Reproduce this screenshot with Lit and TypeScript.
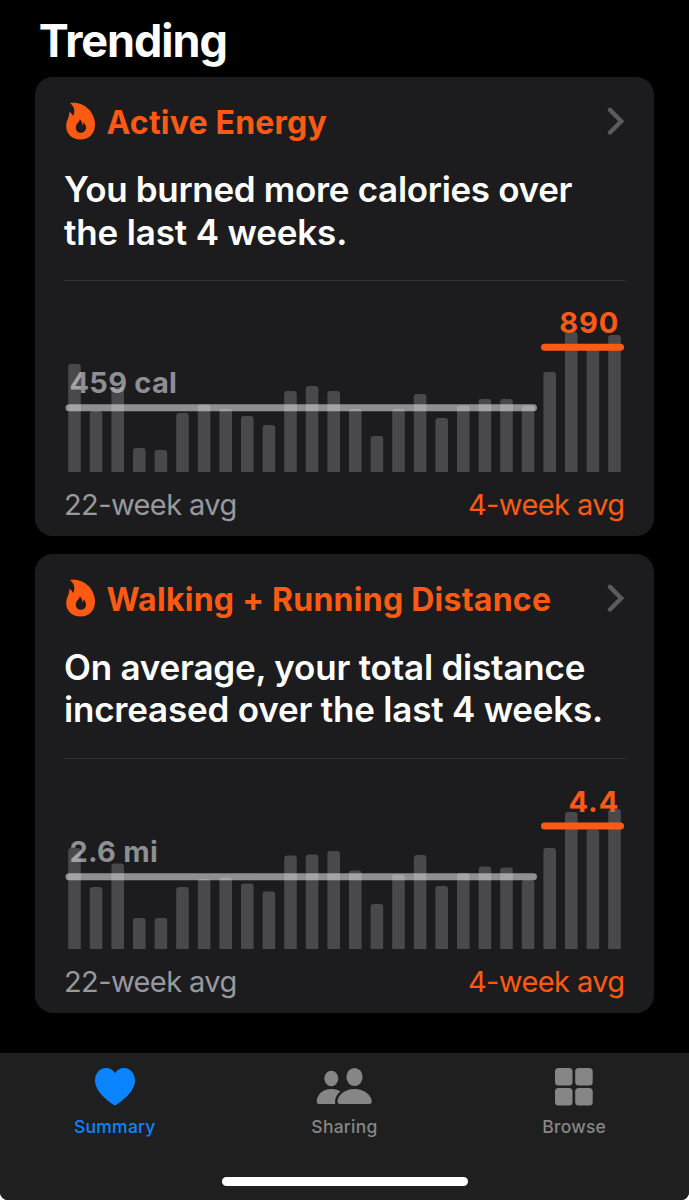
import { LitElement, html, svg, css } from "lit";
import { customElement, property } from "lit/decorators.js";

interface Trend {
  title: string;
  tone: string;
  lines: string[];
  baseLabel: string;
  baseY: number;
  recentLabel: string;
  recentY: number;
  bars: number[];
}

const CHART_H = 191;

const trends: Trend[] = [
  {
    title: "Active Energy",
    tone: "tight",
    lines: ["You burned more calories over", "the last 4 weeks."],
    baseLabel: "459 cal",
    baseY: 126.8,
    recentLabel: "890",
    recentY: 66.3,
    bars: [108, 61, 85, 24, 22, 59, 67.5, 63, 56, 47, 81, 86, 81, 63, 36, 63, 78, 54, 66.5, 73, 73, 66.5, 100, 140, 123, 137],
  },
  {
    title: "Walking + Running Distance",
    tone: "loose",
    lines: ["On average, your total distance", "increased over the last 4 weeks."],
    baseLabel: "2.6 mi",
    baseY: 118.7,
    recentLabel: "4.4",
    recentY: 68,
    bars: [101, 62, 85.5, 31, 31, 62, 70, 71.5, 65.5, 57.5, 93.5, 94.5, 98, 78.5, 45, 74.5, 94, 63, 76, 82.5, 81.5, 69, 101, 137, 119.5, 140],
  },
];

@customElement("trend-card")
export class TrendCard extends LitElement {
  @property({ attribute: false }) trend!: Trend;

  static styles = css`
    :host { display: block; height: 459.4px; border-radius: 18px; background: #1c1c1e; padding: 26px 28px 0 29px; box-sizing: border-box; }
    .head { display: flex; align-items: center; height: 40px; color: #ff5a13; }
    .flame { width: 38px; height: 45px; margin: -3px 6.5px 0 -2px; flex: none; }
    .title { flex: 1; font-size: 32px; line-height: 40px; font-weight: 650; white-space: nowrap; letter-spacing: 0.2px; }
    .loose-title { letter-spacing: 0.26px; }
    .chev { width: 20px; height: 30px; margin-top: -2px; flex: none; }
    .copy { margin-top: 25.7px; color: #fff; font-size: 35px; line-height: 42.5px; font-weight: 600; white-space: nowrap; }
    .tight { letter-spacing: -0.32px; }
    .tight .line + .line { letter-spacing: -0.15px; }
    .loose { letter-spacing: -0.2px; }
    .line { display: block; }
    .rule { height: 1px; margin-top: 27px; background: #323235; }
    .chart { display: block; width: 562px; height: 191px; margin-top: -0.3px; overflow: visible; }
    .num { font-size: 29px; font-weight: 650; letter-spacing: 0.25px; }
    .now { letter-spacing: 0.9px; }
    .foot { display: flex; justify-content: space-between; margin-top: 12.6px; font-size: 29px; line-height: 40px; color: #98989f; white-space: nowrap; padding: 0 1px 0 0; letter-spacing: -0.6px; }
    .recent { color: #ff5a13; }
  `;

  render() {
    const t = this.trend;
    return html`
      <div class="head">
        <svg class="flame" viewBox="0 0 38 45" fill="currentColor">
          <path fill-rule="evenodd" d="M8 4C22 2 33 13 33 25.500C33 34.500 27 40.500 18.600 40.500C10 40.500 4.200 35 4.200 27C4.200 21.500 7.600 18.500 7.400 12.800C9.300 14 10.400 15.400 11 17.200C13.600 12.500 12.500 7.500 8 4ZM17.800 20C17.600 23.300 13.800 24.700 13.800 28.700C13.800 31.800 16 33.800 18.900 33.800C21.900 33.800 24 31.700 24 28.800C24 26.200 22.700 24.400 21.400 23.300C21.500 24.800 21.100 25.900 20.300 26.500C20.500 24 19.600 21.800 17.800 20Z"/>
        </svg>
        <span class="title ${t.tone}-title">${t.title}</span>
        <svg class="chev" viewBox="0 0 20 30" fill="none" stroke="#5b5b5f" stroke-width="4.400" stroke-linecap="round" stroke-linejoin="miter"><path d="M4 2.900L15.200 14.200L4 25.500"/></svg>
      </div>
      <div class="copy ${t.tone}">${t.lines.map((l) => html`<span class="line">${l}</span>`)}</div>
      <div class="rule"></div>
      <svg class="chart" viewBox="64 0 562 191">
        <text class="num" x="69.500" y=${t.baseY - 15} fill="#8e8e93">${t.baseLabel}</text>
        <line x1="69" x2="533.500" y1=${t.baseY} y2=${t.baseY} stroke="#8e8e93" stroke-width="7" stroke-linecap="round"/>
        ${t.bars.map((h, i) => {
          const x = 68.2 + i * 21.6, y = CHART_H - h;
          return svg`<path fill="#fff" fill-opacity="0.2" d="M${x} ${CHART_H}V${y + 3}q0 -3 3 -3h6.600q3 0 3 3V${CHART_H}Z"/>`;
        })}
        <line x1="544.500" x2="620.500" y1=${t.recentY} y2=${t.recentY} stroke="#ff5a13" stroke-width="7" stroke-linecap="round"/>
        <text class="num now" x="619.200" y=${t.recentY - 14.3} text-anchor="end" fill="#ff5a13">${t.recentLabel}</text>
      </svg>
      <div class="foot"><span>22-week avg</span><span class="recent">4-week avg</span></div>
    `;
  }
}

@customElement("app-root")
export class AppRoot extends LitElement {
  static styles = css`
    :host { display: flex; flex-direction: column; width: 689px; height: 1200px; box-sizing: border-box; background: #000; color: #fff; font-family: Inter, "Liberation Sans", sans-serif; overflow: hidden; border-radius: 0 0 8px 8px; }
    .heading { margin: 11px 0 0 38.7px; height: 60px; font-size: 45px; line-height: 60px; font-weight: 700; letter-spacing: -1.05px; }
    .cards { display: flex; flex-direction: column; gap: 17.9px; padding: 5.6px 35.5px 0 35px; flex: 1; }
    .bar { height: 147px; background: #1f1f1f; display: flex; flex-direction: column; }
    .tabs { display: grid; grid-template-columns: repeat(3, 1fr); height: 124px; }
    .tab { display: flex; flex-direction: column; align-items: center; color: #868686; font-size: 17.5px; line-height: 24px; font-weight: 500; letter-spacing: 0.25px; }
    .active { color: #0b84ff; }
    .icon { width: 60px; height: 40px; margin: 14px 0 -5px; }
    .label { margin-top: 12.6px; }
    .home { width: 246px; height: 9px; border-radius: 5px; background: #fff; margin: 0 auto; }
  `;

  render() {
    return html`
      <div class="heading">Trending</div>
      <div class="cards">${trends.map((t) => html`<trend-card .trend=${t}></trend-card>`)}</div>
      <div class="bar">
        <div class="tabs">
          <div class="tab active">
            <svg class="icon" viewBox="0 0 60 40" fill="currentColor"><path d="M30 38.500C24 35 10 25 10 13.500C10 6.500 14.700 1 21 1C25 1 28.300 3 30 6.300C31.700 3 35 1 39 1C45.300 1 50 6.500 50 13.500C50 25 36 35 30 38.500Z"/></svg>
            <span class="label">Summary</span>
          </div>
          <div class="tab">
            <svg class="icon" viewBox="0 0 60 40" fill="currentColor">
              <ellipse cx="17.300" cy="11.500" rx="7" ry="7.700"/><ellipse cx="40.500" cy="10" rx="8.100" ry="9.100"/>
              <path d="M17.300 22C21.500 22 24.500 23.200 26.300 24.600C22.500 27.800 20.600 32 21.200 37H5Q2.700 37 2.700 34.800C2.700 28 8.500 22 17.300 22Z"/>
              <path d="M40.500 22C51 22 57.700 29 57.700 34.500Q57.700 37 55 37H26.200Q23.500 37 23.500 34.500C23.500 29 30 22 40.500 22Z"/>
            </svg>
            <span class="label">Sharing</span>
          </div>
          <div class="tab">
            <svg class="icon" viewBox="0 0 60 40" fill="currentColor"><rect x="11" y="1" width="17.500" height="17.500" rx="3.500"/><rect x="31.200" y="1" width="17.500" height="17.500" rx="3.500"/><rect x="11" y="21" width="17.500" height="17.500" rx="3.500"/><rect x="31.200" y="21" width="17.500" height="17.500" rx="3.500"/></svg>
            <span class="label">Browse</span>
          </div>
        </div>
        <div class="home"></div>
      </div>
    `;
  }
}
